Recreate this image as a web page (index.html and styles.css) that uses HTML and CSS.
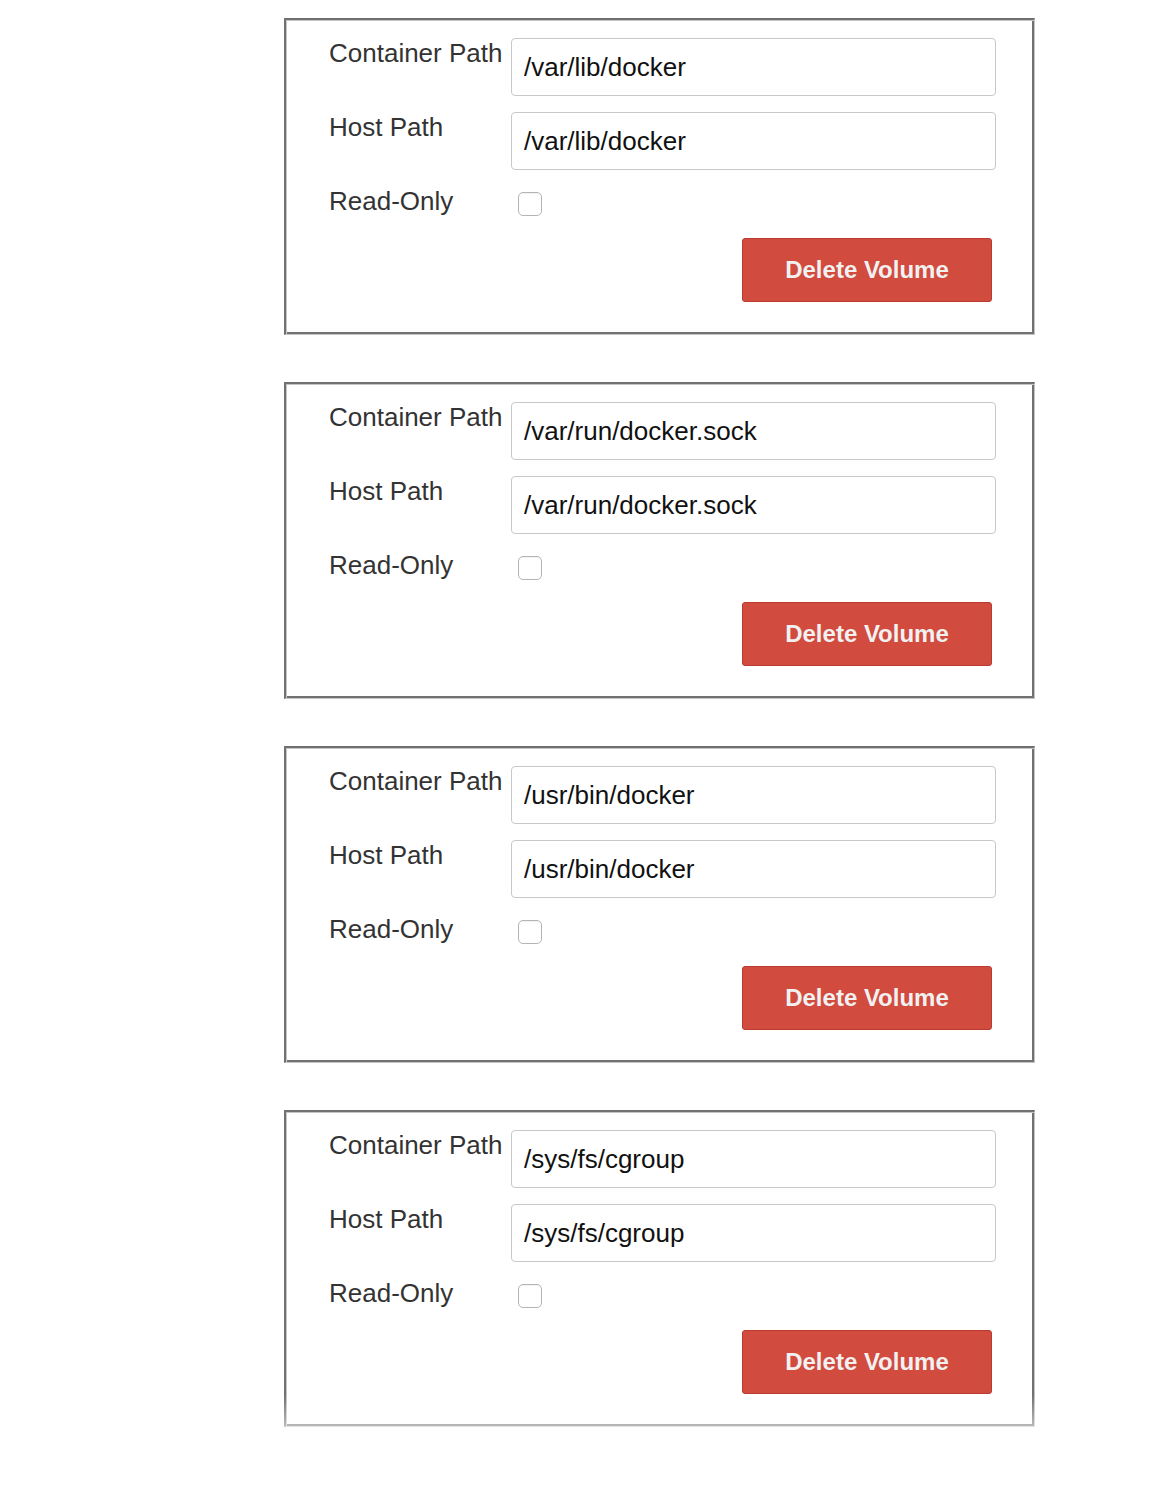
FILE: index.html
```html
<!DOCTYPE html>
<html>
<head>
<meta charset="utf-8">
<link rel="stylesheet" href="styles.css">
</head>
<body>
<div class="volumes">
  <div class="volume">
    <div class="row"><label class="lbl">Container Path</label><input class="field" type="text" value="/var/lib/docker"></div>
    <div class="row"><label class="lbl">Host Path</label><input class="field" type="text" value="/var/lib/docker"></div>
    <div class="row row-check"><label class="lbl">Read-Only</label><input class="check" type="checkbox"></div>
    <div class="actions"><button class="btn-delete">Delete Volume</button></div>
  </div>
  <div class="volume">
    <div class="row"><label class="lbl">Container Path</label><input class="field" type="text" value="/var/run/docker.sock"></div>
    <div class="row"><label class="lbl">Host Path</label><input class="field" type="text" value="/var/run/docker.sock"></div>
    <div class="row row-check"><label class="lbl">Read-Only</label><input class="check" type="checkbox"></div>
    <div class="actions"><button class="btn-delete">Delete Volume</button></div>
  </div>
  <div class="volume">
    <div class="row"><label class="lbl">Container Path</label><input class="field" type="text" value="/usr/bin/docker"></div>
    <div class="row"><label class="lbl">Host Path</label><input class="field" type="text" value="/usr/bin/docker"></div>
    <div class="row row-check"><label class="lbl">Read-Only</label><input class="check" type="checkbox"></div>
    <div class="actions"><button class="btn-delete">Delete Volume</button></div>
  </div>
  <div class="volume volume-last">
    <div class="row"><label class="lbl">Container Path</label><input class="field" type="text" value="/sys/fs/cgroup"></div>
    <div class="row"><label class="lbl">Host Path</label><input class="field" type="text" value="/sys/fs/cgroup"></div>
    <div class="row row-check"><label class="lbl">Read-Only</label><input class="check" type="checkbox"></div>
    <div class="actions"><button class="btn-delete">Delete Volume</button></div>
  </div>
</div>
</body>
</html>
```
FILE: styles.css
```css
html, body {
  background: #ffffff;
}
body {
  margin: 8px;
  font-family: "Liberation Sans", Arial, sans-serif;
}
.volumes {
  margin-left: 276px;
  padding-top: 10px;
  width: 751px;
}
.volume {
  position: relative;
  box-sizing: border-box;
  width: 751px;
  border-style: solid;
  border-width: 2px 1px 1px 2px;
  border-color: #717171 #c4c4c4 #c4c4c4 #717171;
  box-shadow: inset 1px 1px 0 #c4c4c4, inset -2px -2px 0 #717171;
  padding: 18px 37px 32px 43px;
  margin-bottom: 47px;
}
.row {
  display: flex;
  align-items: flex-start;
  height: 58px;
  margin-bottom: 16px;
}
.row-check {
  height: 29px;
  margin-bottom: 23px;
}
.lbl {
  width: 182px;
  flex: none;
  font-size: 26px;
  line-height: 30px;
  color: #333333;
  margin-top: 0;
}
.field {
  box-sizing: border-box;
  width: 485px;
  height: 58px;
  margin: 0;
  border: 1px solid #c8c8c8;
  border-radius: 4px;
  padding: 0 12px;
  font-family: "Liberation Sans", Arial, sans-serif;
  font-size: 26px;
  color: #111111;
  background: #ffffff;
  outline: none;
}
.check {
  -webkit-appearance: none;
  appearance: none;
  box-sizing: border-box;
  width: 24px;
  height: 24px;
  margin: 6px 0 0 7px;
  border: 1px solid #b4b4b4;
  border-radius: 5px;
  background: #ffffff;
  box-shadow: inset 0 1px 1px rgba(0,0,0,0.06);
}
.actions {
  display: flex;
  justify-content: flex-end;
  padding-right: 5px;
}
.btn-delete {
  box-sizing: border-box;
  width: 250px;
  height: 64px;
  margin: 0;
  background: #d24b3f;
  border: 1px solid #b93a2f;
  border-radius: 3px;
  color: #f1f1f1;
  font-family: "Liberation Sans", Arial, sans-serif;
  font-weight: bold;
  font-size: 24px;
  padding: 0;
}
.volume-last::after {
  content: "";
  position: absolute;
  left: -3px;
  right: -3px;
  bottom: -3px;
  height: 34px;
  background: linear-gradient(to bottom, rgba(255,255,255,0), rgba(255,255,255,0.55));
  pointer-events: none;
}
```
